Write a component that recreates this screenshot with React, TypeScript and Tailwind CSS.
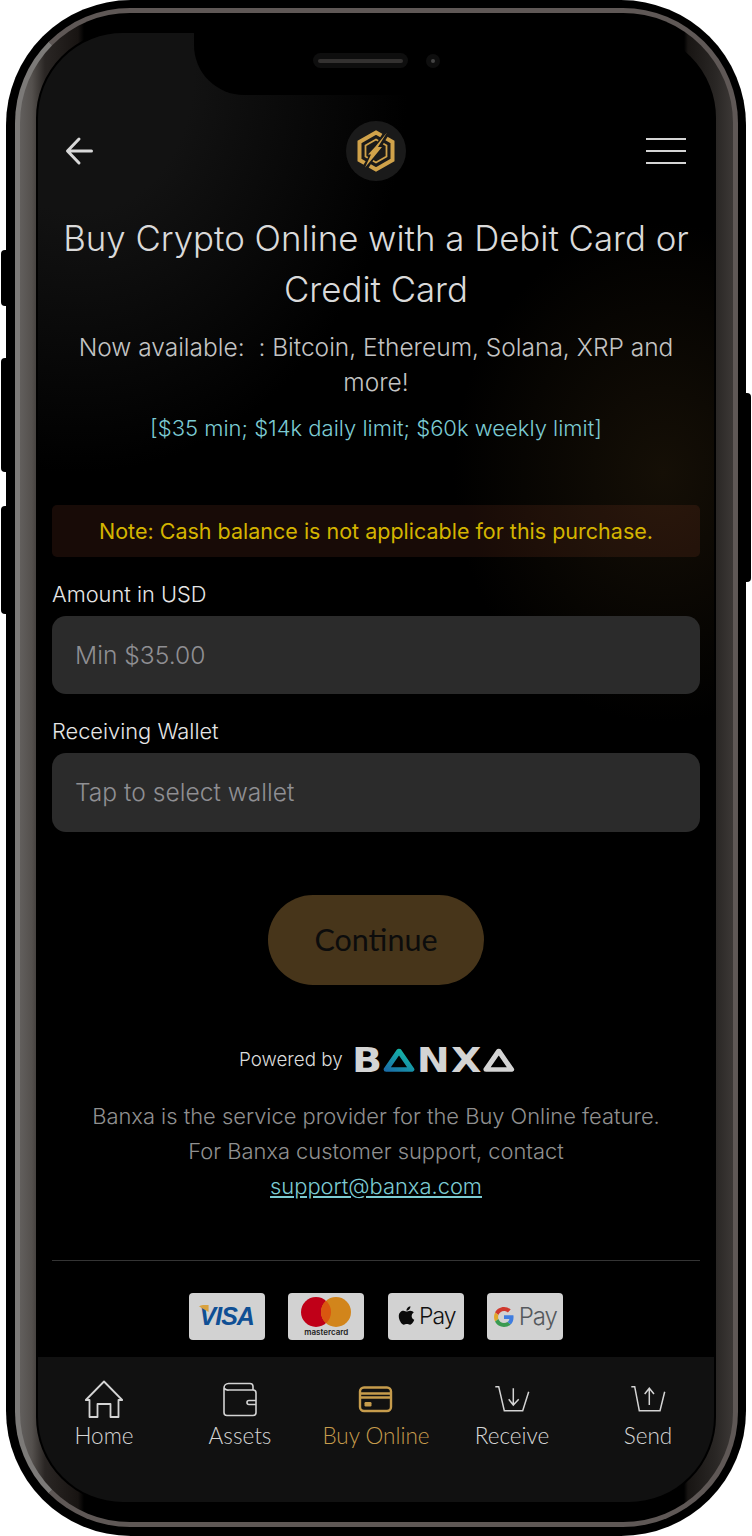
import { FaApple } from 'react-icons/fa';

const inter = 'font-["Inter",sans-serif]';
const quick = 'font-["Lato",sans-serif]';

const HexLogo = () => (
  <svg width="60" height="60" viewBox="0 0 60 60" fill="none">
    <path d="M30 11.5 L46.5 21 V39 L30 48.5 L13.5 39 V21 Z" stroke="#d0a24a" strokeWidth="4" strokeLinejoin="miter" />
    <path d="M30 18.500 L40.500 24.500 V35.500 L30 41.500 L19.500 35.500 V24.500 Z" stroke="#d0a24a" strokeWidth="1.8" />
    <path d="M41 11 L19 47" stroke="#1a1a1a" strokeWidth="6" />
    <path d="M41 11.5 L32 26 H36 L27 37 L19 46.5 L25 33.500 H22 L29 26 Z" fill="#d0a24a" />
  </svg>
);

const HomeIcon = () => (
  <svg width="40" height="40" viewBox="0 0 40 40" fill="none" stroke="#d4d4d4" strokeWidth="1.8" strokeLinejoin="round">
    <path d="M20 1.5 L1.8 20 H5.5 V37 H13.5 V24 H26.5 V37 H34.5 V20 H38.2 Z" />
  </svg>
);

const WalletIcon = () => (
  <svg width="40" height="40" viewBox="0 0 40 40" fill="none" stroke="#d4d4d4" strokeWidth="1.6" strokeLinejoin="round">
    <path d="M4 8 a4.5 4.5 0 0 1 4.5 -4.5 H30 a3 3 0 0 1 3 3 V10" />
    <path d="M4 8 V32.5 a3 3 0 0 0 3 3 H33 a3 3 0 0 0 3 -3 V13 a3 3 0 0 0 -3 -3 H9 a5 5 0 0 1 -5 -2" />
    <path d="M36 20.5 H29 a2 2 0 0 0 0 4 H36" />
  </svg>
);

const CardIcon = () => (
  <svg width="40" height="40" viewBox="0 0 40 40" fill="none" stroke="#c69c4c" strokeWidth="2.4">
    <rect x="4" y="7.5" width="31" height="23.5" rx="4" />
    <path d="M4 13.500 H35 M4 17.500 H35" />
    <rect x="8.5" y="22" width="7" height="4.500" rx="1.200" fill="#c69c4c" stroke="none" />
  </svg>
);

const ReceiveIcon = () => (
  <svg width="40" height="40" viewBox="0 0 40 40" fill="none" stroke="#d4d4d4" strokeWidth="1.5">
    <path d="M3.3 6.7 H6.7 L12.3 30.7 H30.7 L36.7 11.7" />
    <path d="M21.3 8.3 V25 M16.7 19.3 L21.3 25 L26.7 19.3" />
  </svg>
);

const SendIcon = () => (
  <svg width="40" height="40" viewBox="0 0 40 40" fill="none" stroke="#d4d4d4" strokeWidth="1.5">
    <path d="M3.3 6.7 H6.7 L11.3 30.7 H32 L36.7 11.7" />
    <path d="M21.3 25 V8.3 M16.7 14 L21.3 8.3 L26 14" />
  </svg>
);

const BanxaTriangle = ({ teal }: { teal?: boolean }) => (
  <svg width="29" height="26" viewBox="0 0 29 26" fill="none">
    <defs>
      <linearGradient id="banxaTeal" x1="0" y1="1" x2="0.8" y2="0">
        <stop offset="0" stopColor="#1a6fa8" />
        <stop offset="1" stopColor="#14b8a6" />
      </linearGradient>
    </defs>
    <path d="M14.500 4 L25.500 22.500 H3.500 Z" stroke={teal ? 'url(#banxaTeal)' : '#d4d4d4'} strokeWidth="4.500" strokeLinejoin="round" />
  </svg>
);

const GoogleG = () => (
  <svg width="20" height="20" viewBox="0 0 48 48">
    <path fill="#d0392e" d="M24 9.5c3.5 0 6.700 1.200 9.200 3.600l6.900-6.900C35.900 2.400 30.400 0 24 0 14.600 0 6.500 5.400 2.600 13.200l8 6.200C12.500 13.600 17.800 9.500 24 9.500z" />
    <path fill="#3f7de0" d="M46.900 24.500c0-1.600-.1-3.100-.4-4.500H24v9h12.900c-.6 3-2.200 5.500-4.700 7.200l7.700 6c4.500-4.200 7-10.300 7-17.700z" />
    <path fill="#e2a82a" d="M10.600 28.600c-.5-1.500-.8-3-.8-4.600s.3-3.200.8-4.600l-8-6.200C.9 16.500 0 20.100 0 24s.9 7.500 2.600 10.800l8-6.200z" />
    <path fill="#3a9a50" d="M24 48c6.500 0 11.900-2.100 15.900-5.800l-7.700-6c-2.200 1.400-4.900 2.300-8.200 2.300-6.200 0-11.500-4.200-13.400-9.800l-8 6.200C6.500 42.600 14.600 48 24 48z" />
  </svg>
);

const PayCard = ({ children }: { children: React.ReactNode }) => (
  <div className="flex h-[47px] w-[76px] items-center justify-center rounded-[4px] bg-[#d2d2d2]">{children}</div>
);

const navItems = [
  { label: 'Home', icon: <HomeIcon /> },
  { label: 'Assets', icon: <WalletIcon /> },
  { label: 'Buy Online', icon: <CardIcon />, active: true },
  { label: 'Receive', icon: <ReceiveIcon /> },
  { label: 'Send', icon: <SendIcon /> },
];

export default function App() {
  return (
    <div className={`relative h-[1536px] w-[752px] overflow-hidden bg-white ${inter}`}>
      {/* side buttons */}
      <div className="absolute left-[1px] top-[250px] h-[56px] w-[10px] rounded-l-[4px] bg-black" />
      <div className="absolute left-[1px] top-[358px] h-[114px] w-[10px] rounded-l-[4px] bg-black" />
      <div className="absolute left-[1px] top-[506px] h-[108px] w-[10px] rounded-l-[4px] bg-black" />
      <div className="absolute right-[1px] top-[393px] h-[189px] w-[10px] rounded-r-[4px] bg-black" />

      {/* phone body */}
      <div className="relative ml-[6px] h-[1536px] w-[740px] rounded-[125px] bg-black pb-[9px] pl-[9px] pr-[8px] pt-[8px]">
        <div className="h-full w-full rounded-[115px] border-[5px] border-[#5f5856] border-l-[#7c7a78] bg-[linear-gradient(to_right,#625f5d_0px,#54504d_12px,#2a2624_25px,#181412_58px,#000_64px,#000_664px,#181513_668px,#2a2725_696px,#3c3836_713px)] py-[18px] pl-[16px] pr-[17px]">
          {/* screen */}
          <div className="relative flex h-full flex-col overflow-hidden rounded-[87px] border-[2px] border-black bg-black bg-[radial-gradient(ellipse_210px_250px_at_625px_440px,#150f06_0%,transparent_100%),radial-gradient(ellipse_330px_400px_at_40px_40px,#121212_35%,transparent_100%)] text-center">
            {/* notch */}
            <div className="absolute left-[156px] top-0 h-[62px] w-[370px] rounded-b-[50px] bg-black">
              <div className="absolute left-[119px] top-[20px] flex h-[15px] w-[95px] items-center rounded-full bg-[#0e0e0e] px-[5px]">
                <div className="h-[4px] w-full rounded-full bg-[#333130]" />
              </div>
              <div className="absolute left-[232px] top-[21px] flex h-[14px] w-[14px] items-center justify-center rounded-full bg-[#0e0e0e]">
                <div className="h-[4px] w-[4px] rounded-full bg-[#444]" />
              </div>
            </div>

            <div className="px-[14px]">
              {/* header */}
              <div className="mt-[88px] flex h-[60px] items-center justify-between px-[14px]">
                <div className="w-[40px]">
                  <svg className="-ml-[1px]" width="30" height="30" viewBox="0 0 30 30" fill="none" stroke="#d8d8d8" strokeWidth="3" strokeLinecap="round" strokeLinejoin="round">
                    <path d="M26.500 15 H3 M14 3 L2.500 15 L14 27" />
                  </svg>
                </div>
                <div className="flex h-[60px] w-[60px] items-center justify-center rounded-full bg-[#1a1a1a]">
                  <HexLogo />
                </div>
                <div className="flex w-[40px] flex-col gap-[9.5px]">
                  <div className="h-[2.5px] bg-[#d4d4d4]" />
                  <div className="h-[2.5px] bg-[#d4d4d4]" />
                  <div className="h-[2.5px] bg-[#d4d4d4]" />
                </div>
              </div>

              <h1 className="mt-[32px] text-[34.800px] font-light leading-[50.500px] text-[#dadada]">
                Buy Crypto Online with a Debit Card or Credit Card
              </h1>
              <p className="mt-[16px] text-[24.500px] font-light leading-[35px] text-[#c4c4c4] [font-feature-settings:'calt'_0]">
                Now available:&nbsp; : Bitcoin, Ethereum, Solana, XRP and more!
              </p>
              <p className="mt-[12px] text-[22px] font-light leading-[32px] text-[#7ccbd3]">
                [$35 min; $14k daily limit; $60k weekly limit]
              </p>

              <div className="mt-[61px] flex h-[52px] items-center justify-center rounded-[5px] bg-[#f06a45]/10 text-[21.500px] font-normal text-[#d4b400]">
                Note: Cash balance is not applicable for this purchase.
              </div>

              <div className="mt-[22px] text-left text-[21.800px] font-light leading-[30px] text-[#e6e6e6]">Amount in USD</div>
              <div className="mt-[7px] flex h-[78px] items-center rounded-[14px] bg-[#2b2b2b] pl-[23px] text-[24.600px] font-light text-[#8f8f93]">
                Min $35.00
              </div>
              <div className="mt-[22px] text-left text-[21.800px] font-light leading-[30px] text-[#e6e6e6]">Receiving Wallet</div>
              <div className="mt-[7px] flex h-[79px] items-center rounded-[14px] bg-[#2b2b2b] pl-[23px] text-[24.600px] font-light text-[#8f8f93]">
                Tap to select wallet
              </div>

              <div className={`mx-auto mt-[63px] flex h-[90px] w-[216px] items-center justify-center rounded-[45px] bg-[#47351a] text-[30.500px] text-[#0c0c0c] ${quick}`}>
                Continue
              </div>

              <div className="mt-[62px] flex h-[26px] items-center pl-[187px]">
                <span className="text-[18.800px] font-light text-[#dcdcdc]">Powered by</span>
                <span className="ml-[9px] flex w-[145px] origin-left scale-x-[1.16] items-center font-['DejaVu_Sans',sans-serif] text-[34px] font-bold leading-none text-[#d4d4d4]">
                  <span>B</span>
                  <BanxaTriangle teal />
                  <span className="ml-[1px]">N</span>
                  <span className="ml-[1px]">X</span>
                  <BanxaTriangle />
                </span>
              </div>

              <div className="mt-[26px] text-[21.900px] font-light leading-[35px] text-[#909090]">
                <p>Banxa is the service provider for the Buy Online feature.</p>
                <p>For Banxa customer support, contact</p>
                <p className="text-[#7ccbd3] underline">support@banxa.com</p>
              </div>

              <div className="mt-[56px] h-px bg-[#343434]" />

              <div className="mt-[32px] flex justify-center gap-[23.500px]">
                <PayCard>
                  <span className="relative font-['Liberation_Sans',sans-serif] text-[25px] font-bold italic leading-none tracking-[-1px] text-[#0f4f94]">
                    <span className="absolute -left-[3px] top-[1px] h-[7px] w-[12px] rounded-tl-[6px] bg-[#d9a23f] [clip-path:polygon(0_0,100%_0,100%_100%)]" />
                    VISA
                  </span>
                </PayCard>
                <PayCard>
                  <div className="flex flex-col items-center">
                    <svg width="50" height="30" viewBox="0 0 50 30">
                      <circle cx="15" cy="15" r="15" fill="#c00018" />
                      <circle cx="35" cy="15" r="15" fill="#d2851b" />
                      <path d="M25 3.800 a15 15 0 0 1 0 22.400 a15 15 0 0 1 0 -22.400 Z" fill="#d9560f" />
                    </svg>
                    <span className="mt-[1px] text-[8px] font-semibold leading-[9px] text-[#222]">mastercard</span>
                  </div>
                </PayCard>
                <PayCard>
                  <FaApple className="mb-[3px] text-[21px] text-[#0a0a0a]" />
                  <span className="ml-[2px] text-[23px] font-light leading-none tracking-[-1px] text-[#111]">Pay</span>
                </PayCard>
                <PayCard>
                  <GoogleG />
                  <span className="ml-[5px] text-[24px] font-light leading-none tracking-[-1px] text-[#55595d]">Pay</span>
                </PayCard>
              </div>
            </div>

            {/* bottom nav */}
            <div className={`mt-auto h-[145px] bg-[#111111] pt-[23px] font-light ${quick}`}>
              <div className="-ml-[2px] flex w-[680px]">
                {navItems.map((item) => (
                  <div key={item.label} className="flex w-[136px] flex-col items-center">
                    {item.icon}
                    <span className={`text-[22.500px] leading-[32px] ${item.active ? 'text-[#c69c4c]' : 'text-[#d6d6d6]'}`}>
                      {item.label}
                    </span>
                  </div>
                ))}
              </div>
            </div>
          </div>
        </div>
      </div>
    </div>
  );
}
